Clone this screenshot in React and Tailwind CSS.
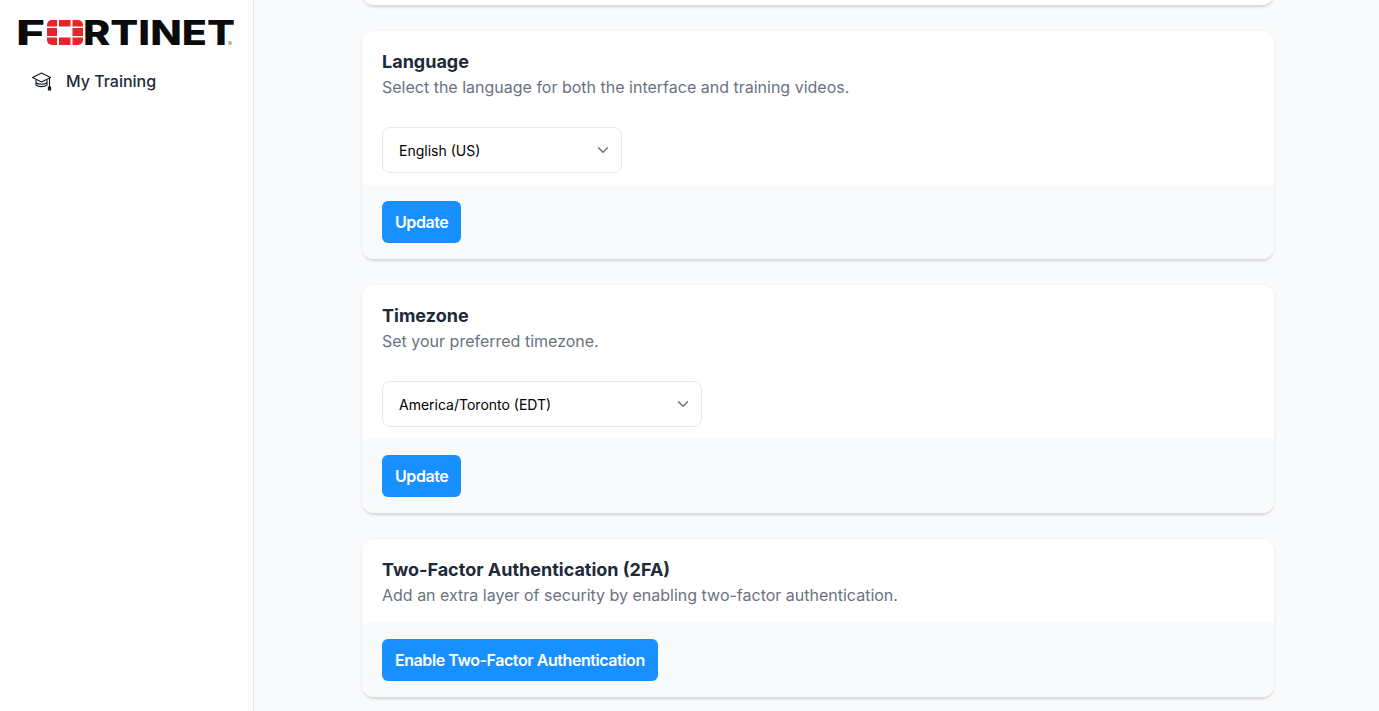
import { ChevronDown } from 'lucide-react';

const FortinetLogo = () => (
    <svg width="218" height="28" viewBox="0 0 218 28" className="block overflow-visible">
        <g fontFamily="Inter, sans-serif" fontWeight="800" fontSize="34.5" fill="#0b0b0b">
            <text x="-2" y="25" textLength="29" lengthAdjust="spacingAndGlyphs">F</text>
            <text x="65" y="25" textLength="152" lengthAdjust="spacingAndGlyphs">RTINET</text>
        </g>
        {/* red firewall "O" */}
        <g fill="#e4262b">
            <path d="M29 6.500V5a5 5 0 0 1 5-5h5v6.500z" />
            <rect x="41" y="0" width="11.500" height="6.500" />
            <path d="M54.500 0H60a5 5 0 0 1 5 5v1.500H54.500z" />
            <rect x="29" y="8" width="10" height="8" />
            <rect x="54.500" y="8" width="10.500" height="8" />
            <path d="M29 17.500h10V25h-5a5 5 0 0 1-5-5z" />
            <rect x="41" y="17.500" width="11.500" height="7.500" />
            <path d="M54.500 17.500H65V20a5 5 0 0 1-5 5h-5.500z" />
        </g>
        <text x="210" y="26" fontFamily="Inter, sans-serif" fontSize="6" fill="#777">®</text>
    </svg>
);

const CapIcon = () => (
    <svg width="22" height="22" viewBox="0 0 22 22" fill="none" stroke="#111827" strokeWidth="1.1" strokeLinejoin="round">
        <path d="M1.500 7.500 10.500 3 19.500 7.500 10.500 12z" />
        <path d="M5 10v5c2.500 2.200 8.500 2.200 11 0V10" />
        <path d="M5 12.800c2.500 2 8.500 2 11 0" />
        <path d="M18.500 8V17" />
        <rect x="17.400" y="17" width="2.200" height="3" fill="#111827" />
    </svg>
);

const Card = ({ title, description, children, action }) => (
    <div className="rounded-xl bg-white shadow-[0_3px_3px_-1px_rgba(0,0,0,0.12),0_1px_4px_rgba(0,0,0,0.05)] overflow-hidden">
        <div className="px-5 pt-[17px] pb-4">
            <h2 className="text-lg font-bold text-gray-800">{title}</h2>
            <p className="-mt-px text-base text-gray-500">{description}</p>
        </div>
        {children && <div className="px-5 pt-3 pb-3">{children}</div>}
        <div className="bg-gray-50 px-5 py-4">
            <button className="h-[42px] px-[13px] rounded-md bg-[#1890ff] text-white text-base font-semibold tracking-[-0.43px]">{action}</button>
        </div>
    </div>
);

const SelectBox = ({ value, width }) => (
    <div className={`relative ${width}`}>
        <select defaultValue={value} className="w-full h-[46px] appearance-none rounded-lg border border-gray-200 bg-white px-4 pt-[2px] text-sm text-black outline-none">
            <option>{value}</option>
        </select>
        <ChevronDown size={18} strokeWidth={2} className="absolute right-[10px] top-[14px] text-gray-500 pointer-events-none" />
    </div>
);

const App = () => {
    return (
        <div className="flex h-screen overflow-hidden bg-gray-50 font-['Inter',sans-serif]">
            <aside className="w-[254px] shrink-0 bg-white border-r border-gray-200">
                <div className="pl-[18px] pt-5">
                    <FortinetLogo />
                </div>
                <div className="flex items-center gap-[13px] pl-[31px] mt-[21px] h-6">
                    <CapIcon />
                    <span className="text-base font-medium text-gray-800">My Training</span>
                </div>
            </aside>
            <main className="flex-1 pl-[108px]">
                <div className="w-[912px] flex flex-col gap-[26px] -mt-[55px]">
                    <div className="h-[60px] rounded-xl bg-white shadow-[0_3px_3px_-1px_rgba(0,0,0,0.12),0_1px_4px_rgba(0,0,0,0.05)]" />
                    <Card title="Language" description="Select the language for both the interface and training videos." action="Update">
                        <SelectBox value="English (US)" width="w-[240px]" />
                    </Card>
                    <Card title="Timezone" description="Set your preferred timezone." action="Update">
                        <SelectBox value="America/Toronto (EDT)" width="w-[320px]" />
                    </Card>
                    <Card title="Two-Factor Authentication (2FA)" description="Add an extra layer of security by enabling two-factor authentication." action="Enable Two-Factor Authentication" />
                </div>
            </main>
        </div>
    );
};

export default App;
